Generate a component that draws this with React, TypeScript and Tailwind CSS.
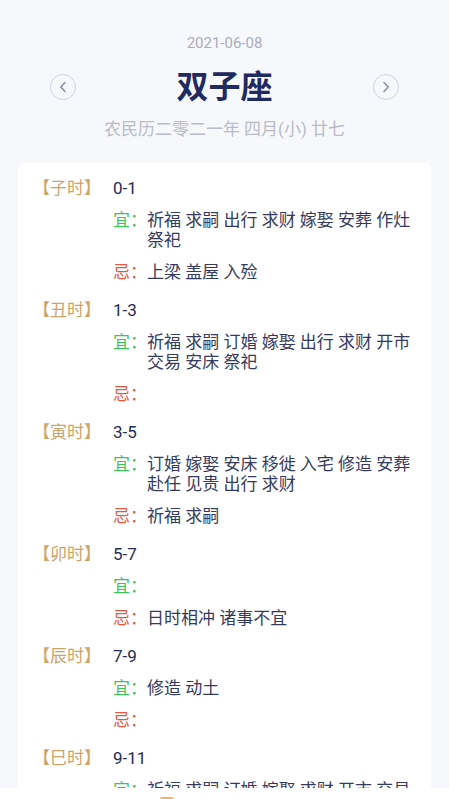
import React from "react";

type Hour = { name: string; time: string; yi: string; ji: string };

const hours: Hour[] = [
  { name: "子时", time: "0-1", yi: "祈福 求嗣 出行 求财 嫁娶 安葬 作灶 祭祀", ji: "上梁 盖屋 入殓" },
  { name: "丑时", time: "1-3", yi: "祈福 求嗣 订婚 嫁娶 出行 求财 开市 交易 安床 祭祀", ji: "" },
  { name: "寅时", time: "3-5", yi: "订婚 嫁娶 安床 移徙 入宅 修造 安葬 赴任 见贵 出行 求财", ji: "祈福 求嗣" },
  { name: "卯时", time: "5-7", yi: "", ji: "日时相冲 诸事不宜" },
  { name: "辰时", time: "7-9", yi: "修造 动土", ji: "" },
  { name: "巳时", time: "9-11", yi: "祈福 求嗣 订婚 嫁娶 求财 开市 交易 安床", ji: "出行" },
];

function Chevron({ dir }: { dir: "left" | "right" }) {
  return (
    <div className="w-[26px] h-[26px] rounded-full border border-[#cfd1dc] flex items-center justify-center">
      <svg width="10" height="12" viewBox="0 0 10 12" fill="none">
        {dir === "left" ? (
          <path d="M7 1.5 L2.8 6 L7 10.5" stroke="#8d90a3" strokeWidth="1.6" strokeLinecap="round" strokeLinejoin="round" />
        ) : (
          <path d="M3 1.5 L7.2 6 L3 10.5" stroke="#8d90a3" strokeWidth="1.6" strokeLinecap="round" strokeLinejoin="round" />
        )}
      </svg>
    </div>
  );
}

export default function App() {
  return (
    <div
      className="min-h-screen bg-[#f7f8fc] overflow-hidden"
      style={{ fontFamily: 'Roboto, "Noto Sans CJK SC", sans-serif' }}
    >
      <div className="pt-[33px] flex flex-col items-center">
        <div className="text-[15px] leading-[20px] text-[#a9acbd]">2021-06-08</div>
        <div className="mt-[14px] w-full px-[50px] flex items-center justify-between">
          <Chevron dir="left" />
          <div className="text-[32px] leading-[40px] font-bold text-[#1f2a5e]">双子座</div>
          <Chevron dir="right" />
        </div>
        <div className="mt-[10px] text-[17px] leading-[24px] text-[#b9bbc9]">农民历二零二一年 四月(小) 廿七</div>
      </div>

      <div className="mt-[22px] mx-[18px] bg-white rounded-[6px] pt-[15px] pl-[15px] pr-[14px] pb-[20px] flex flex-col gap-[18px]">
        {hours.map((h) => (
          <div key={h.name} className="flex text-[17px] leading-[20px]">
            <div className="w-[80px] shrink-0 text-[#c9a56c]">【{h.name}】</div>
            <div className="flex-1 flex flex-col gap-[12px]">
              <div className="text-[#252c55]">{h.time}</div>
              <div className="flex">
                <span className="shrink-0 text-[#3cc35a]">宜：</span>
                <span className="flex-1 text-[#363b5e]">{h.yi}</span>
              </div>
              <div className="flex">
                <span className="shrink-0 text-[#e85a40]">忌：</span>
                <span className="flex-1 text-[#363b5e]">{h.ji}</span>
              </div>
            </div>
          </div>
        ))}
      </div>

      <div className="fixed left-0 right-0 bottom-0 h-[11px] bg-white">
        <div className="absolute left-[160px] top-[9px] w-[14px] h-[8px] rounded-[2px] bg-[#f6b352]" />
      </div>
    </div>
  );
}
